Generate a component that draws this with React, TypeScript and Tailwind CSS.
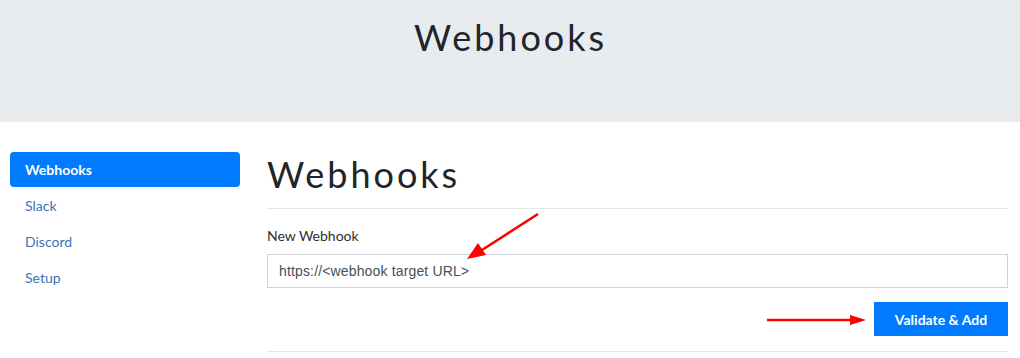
export default function App() {
  const nav = ["Webhooks", "Slack", "Discord", "Setup"];
  return (
    <div className="w-[1020px] h-[358px] overflow-hidden bg-white font-['Lato',sans-serif] relative">
      <header className="h-[122px] bg-[#e9ecef] flex justify-center pt-[13px]">
        <h1 className="text-[36px] leading-[48px] text-[#212529] tracking-[3px] pl-[1px]">Webhooks</h1>
      </header>
      <div className="flex pl-[10px] pr-[12px] pt-[30px] gap-[27px]">
        <nav className="w-[230px] flex flex-col">
          {nav.map((n, i) => (
            <a
              key={n}
              className={
                i === 0
                  ? "h-[35px] flex items-center px-[15px] rounded bg-[#007bff] text-white font-bold text-[14px]"
                  : "h-[36px] flex items-center px-[15px] text-[#3b73b9] text-[14px]"
              }
            >
              {n}
            </a>
          ))}
        </nav>
        <main className="flex-1">
          <h2 className="text-[36px] leading-[44px] text-[#212529] tracking-[3px]">Webhooks</h2>
          <hr className="mt-[12px] border-[#e3e6e9]" />
          <label className="block mt-[16px] text-[14px] text-[#2b2f33]">New Webhook</label>
          <input
            readOnly
            value="https://<webhook target URL>"
            className="mt-[8px] w-full h-[34px] border border-[#ced4da] px-[11px] text-[14px] tracking-[0.15px] text-[#495057] font-['Liberation_Sans',sans-serif] outline-none"
          />
          <div className="flex justify-end mt-[14px]">
            <button className="w-[134px] h-[34px] bg-[#007bff] text-white font-bold text-[14px]">
              Validate &amp; Add
            </button>
          </div>
          <hr className="mt-[15px] border-[#e3e6e9]" />
        </main>
      </div>
      <svg className="absolute left-0 top-0 pointer-events-none" width="1020" height="358">
        <line x1="538" y1="214" x2="482" y2="250" stroke="#f00" strokeWidth="2.5" />
        <polygon points="467,259 478,243 486,255" fill="#f00" />
        <line x1="767" y1="320" x2="850" y2="320" stroke="#f00" strokeWidth="2.5" />
        <polygon points="866,320 850,315 850,325" fill="#f00" />
      </svg>
    </div>
  );
}
